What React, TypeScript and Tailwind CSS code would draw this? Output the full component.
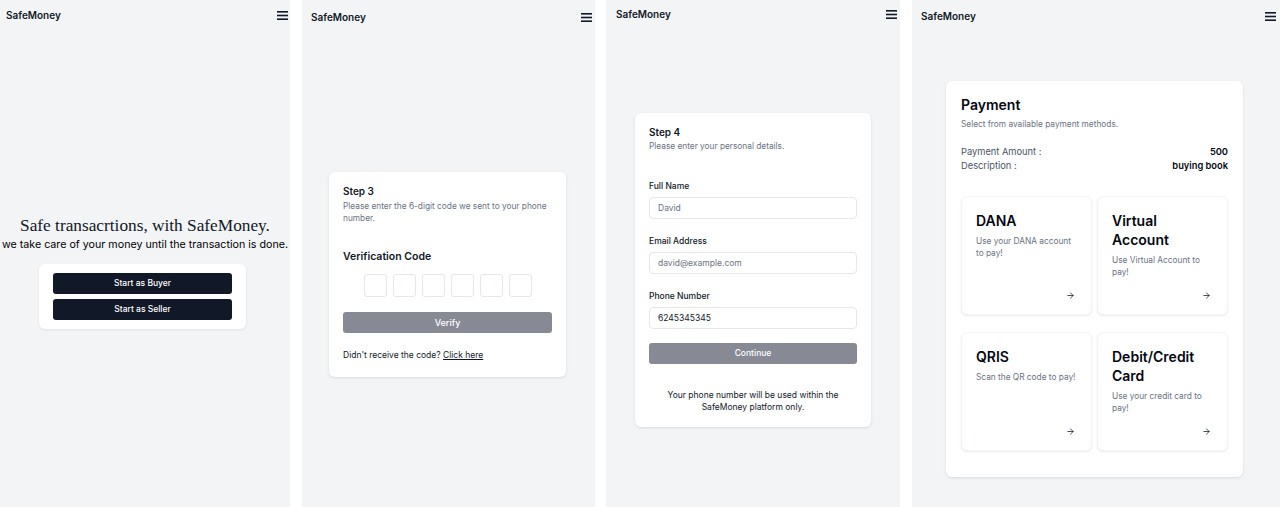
import { ArrowRight } from 'lucide-react';

const font = { fontFamily: 'Inter, "Noto Sans", sans-serif' };

function Burger() {
  return (
    <svg width="11" height="9" viewBox="0 0 11 9" className="block">
      <rect x="0" y="0" width="11" height="1.6" fill="#111827" />
      <rect x="0" y="3.7" width="11" height="1.6" fill="#111827" />
      <rect x="0" y="7.4" width="11" height="1.6" fill="#111827" />
    </svg>
  );
}

function Header({ className }: { className: string }) {
  return (
    <div className={`flex items-center justify-between ${className}`}>
      <span className="text-[10px] font-semibold text-gray-900 leading-none">SafeMoney</span>
      <Burger />
    </div>
  );
}

function Field({ label, value, muted }: { label: string; value: string; muted?: boolean }) {
  return (
    <div>
      <div className="text-[8.5px] font-medium text-gray-900 leading-[12px]">{label}</div>
      <div className="mt-[5px] h-[22px] rounded-[4px] border border-gray-200 bg-white px-[8px] flex items-center">
        <span className={`text-[8.5px] ${muted ? 'text-gray-500' : 'text-gray-900'}`}>{value}</span>
      </div>
    </div>
  );
}

function MethodCard({ title, desc }: { title: string; desc: string }) {
  return (
    <div className="h-[119px] rounded-[6px] bg-white border border-gray-100 shadow-[0_1px_2px_rgba(0,0,0,0.08)] px-[14px] pt-[14px] pb-[14px] flex flex-col">
      <div className="text-[14px] font-semibold leading-[19px] text-gray-950">{title}</div>
      <div className="mt-[5px] text-[8.3px] leading-[12px] text-gray-500">{desc}</div>
      <div className="mt-auto flex justify-end pr-[2px]">
        <ArrowRight size={9} strokeWidth={2} className="text-gray-900" />
      </div>
    </div>
  );
}

export default function App() {
  return (
    <div style={font} className="flex w-[1280px] h-[507px] bg-white overflow-hidden">
      {/* screen 1 */}
      <div className="w-[290px] h-full bg-[#f3f4f6] shrink-0 flex flex-col">
        <Header className="pl-[6px] pr-[2px] pt-[10px]" />
        <div
          className="mt-[195px] text-center text-[17.3px] leading-[22px] text-gray-900"
          style={{ fontFamily: '"Liberation Serif", "DejaVu Serif", serif' }}
        >
          Safe transacrtions, with SafeMoney.
        </div>
        <div className="mt-[1px] text-center text-[10.7px] leading-[14px] text-black whitespace-nowrap">
          we take care of your money until the transaction is done.
        </div>
        <div className="ml-[39px] mt-[12px] w-[207px] rounded-[6px] bg-white shadow-[0_1px_3px_rgba(0,0,0,0.08)] px-[14px] py-[9px] flex flex-col gap-[5px]">
          <button className="h-[21px] rounded-[3px] bg-[#111827] text-white text-[8.5px] font-medium">Start as Buyer</button>
          <button className="h-[21px] rounded-[3px] bg-[#111827] text-white text-[8.5px] font-medium">Start as Seller</button>
        </div>
      </div>

      <div className="w-[12px] shrink-0" />

      {/* screen 2 */}
      <div className="w-[293px] h-full bg-[#f3f4f6] shrink-0 flex flex-col">
        <Header className="pl-[9px] pr-[3px] pt-[12px]" />
        <div className="ml-[27px] mt-[150px] w-[237px] rounded-[6px] bg-white shadow-[0_1px_3px_rgba(0,0,0,0.1)] px-[14px] pt-[12px] pb-[16px]">
          <div className="text-[10px] font-semibold leading-[14px] text-gray-900">Step 3</div>
          <div className="mt-[2px] text-[8.3px] leading-[12px] text-gray-500">
            Please enter the 6-digit code we sent to your phone number.
          </div>
          <div className="mt-[26px] text-[10.5px] font-semibold leading-[14px] text-gray-900">Verification Code</div>
          <div className="mt-[10px] flex justify-center gap-[6px]">
            {[0, 1, 2, 3, 4, 5].map((i) => (
              <div key={i} className="w-[23px] h-[23px] rounded-[3px] border border-gray-200" />
            ))}
          </div>
          <button className="mt-[15px] w-full h-[21px] rounded-[3px] bg-[#878a94] text-white text-[9px] font-medium">
            Verify
          </button>
          <div className="mt-[16px] text-[8.5px] leading-[12px] text-gray-900">
            Didn't receive the code? <span className="underline">Click here</span>
          </div>
        </div>
      </div>

      <div className="w-[11px] shrink-0" />

      {/* screen 3 */}
      <div className="w-[294px] h-full bg-[#f3f4f6] shrink-0 flex flex-col">
        <Header className="pl-[10px] pr-[3px] pt-[9px]" />
        <div className="ml-[29px] mt-[94px] w-[236px] rounded-[6px] bg-white shadow-[0_1px_3px_rgba(0,0,0,0.1)] px-[14px] pt-[12px] pb-[14px]">
          <div className="text-[10px] font-semibold leading-[14px] text-gray-900">Step 4</div>
          <div className="mt-[1px] text-[8.3px] leading-[12px] text-gray-500">Please enter your personal details.</div>
          <div className="mt-[28px] flex flex-col gap-[16px]">
            <Field label="Full Name" value="David" muted />
            <Field label="Email Address" value="david@example.com" muted />
            <Field label="Phone Number" value="6245345345" />
          </div>
          <button className="mt-[14px] w-full h-[21px] rounded-[3px] bg-[#878a94] text-white text-[8.5px] font-medium">
            Continue
          </button>
          <div className="mt-[25px] text-center text-[8.5px] leading-[12px] text-gray-900">
            Your phone number will be used within the
            <br />
            SafeMoney platform only.
          </div>
        </div>
      </div>

      <div className="w-[12px] shrink-0" />

      {/* screen 4 */}
      <div className="flex-1 h-full bg-[#f3f4f6] flex flex-col">
        <Header className="pl-[9px] pr-[4px] pt-[11px]" />
        <div className="ml-[34px] mt-[60px] w-[297px] rounded-[6px] bg-white shadow-[0_1px_3px_rgba(0,0,0,0.1)] px-[15px] pt-[14px] pb-[26px]">
          <div className="text-[14px] font-semibold leading-[20px] text-gray-950">Payment</div>
          <div className="mt-[3px] text-[8.3px] leading-[12px] text-gray-500">Select from available payment methods.</div>
          <div className="mt-[15px] flex justify-between text-[9.3px] leading-[14px]">
            <span className="text-gray-600">Payment Amount :</span>
            <span className="font-semibold text-gray-950">500</span>
          </div>
          <div className="flex justify-between text-[9.3px] leading-[14px]">
            <span className="text-gray-600">Description :</span>
            <span className="font-semibold text-gray-950">buying book</span>
          </div>
          <div className="mt-[23px] grid grid-cols-2 gap-x-[5px] gap-y-[17px]">
            <MethodCard title="DANA" desc="Use your DANA account to pay!" />
            <MethodCard title="Virtual Account" desc="Use Virtual Account to pay!" />
            <MethodCard title="QRIS" desc="Scan the QR code to pay!" />
            <MethodCard title="Debit/Credit Card" desc="Use your credit card to pay!" />
          </div>
        </div>
      </div>
    </div>
  );
}
